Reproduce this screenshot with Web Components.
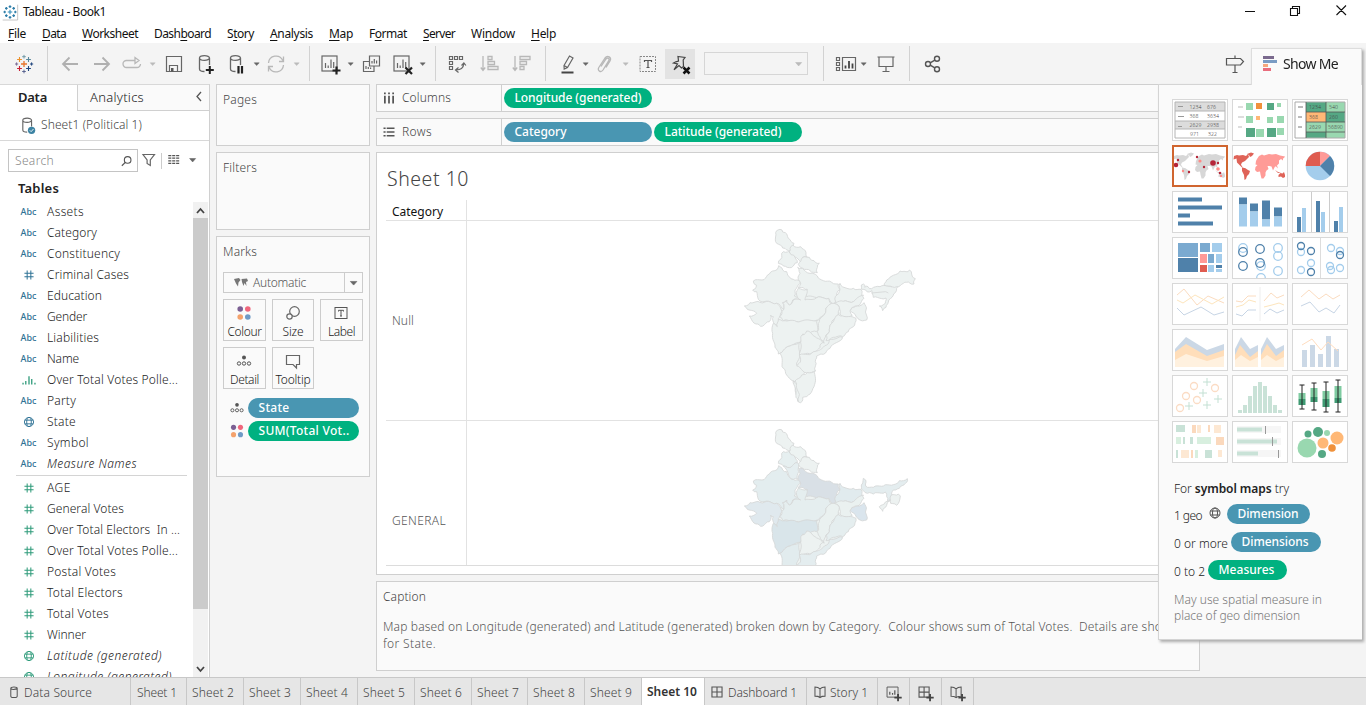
<!DOCTYPE html>
<html lang="en">
<head>
<meta charset="utf-8">
<title>Tableau - Book1</title>
<style>
html,body{margin:0;height:100%;overflow:hidden}
body{font-family:"Noto Sans","Liberation Sans",sans-serif;font-size:12px;font-weight:300;color:#222}
</style>
</head>
<body>
<tb-app></tb-app>
<script>
const make=(tag,css,html,after)=>customElements.define(tag,class extends HTMLElement{
  connectedCallback(){
    if(this.shadowRoot)return;
    const r=this.attachShadow({mode:'open'});
    const t=document.createElement('template');
    t.innerHTML='<style>*{box-sizing:border-box}'+css+'</style>'+(typeof html==='function'?html(this):html);
    r.appendChild(t.content.cloneNode(true));
    if(after)after(this);
  }
});

/* Text run set to a fixed measure by tracking */
make('fit-text',':host{display:inline-block;white-space:pre;flex:none;line-height:16px}','<slot></slot>',el=>{
  const w=+el.getAttribute('w');if(!w)return;
  const n=el.textContent.length;
  const nat=el.getBoundingClientRect().width;
  if(nat)el.style.letterSpacing=((w-nat)/n).toFixed(3)+'px';
});
const T=(s,w,st='')=>`<fit-text w="${w}" style="${st}">${s}</fit-text>`;

const S='fill="none" stroke="#666" stroke-width="1.2"';
const L='fill="none" stroke="#b8b8b8" stroke-width="1.3"';
const plus=(x,y,r,c,w=1)=>`<path d="M${x-r} ${y}h${2*r}M${x} ${y-r}v${2*r}" stroke="${c}" stroke-width="${w}" fill="none"/>`;
const logo=plus(12,12,3,'#e8762d',1.3)+plus(7.5,7.5,2.4,'#eb912c',1.1)+plus(16.5,7.5,2.4,'#59879b',1.1)+plus(7.5,16.5,2.4,'#c72035',1.1)+plus(16.5,16.5,2.4,'#1f457e',1.1)+plus(12,4.7,1.8,'#7099a6')+plus(12,19.5,1.8,'#5b6591')+plus(4.6,12,1.6,'#7b6a96')+plus(19.6,12,1.6,'#1f457e');
const blueLogo='<path d="M0 0h24v24H0z" fill="#fff"/><path d="M23.500 1v23H1" fill="none" stroke="#aaa"/><g fill="none">'+plus(12,12,3.4,'#2f8bb8',1.6)+[[6.5,6.5],[17.5,6.5],[6.5,17.5],[17.5,17.5],[12,4],[12,20],[4,12],[20,12]].map(p=>plus(p[0],p[1],2,'#2d7da8',1.8)).join('')+'</g>';
const dots=`<circle cx="8.2" cy="8" r="2.8" fill="#7b5f93"/><circle cx="15.8" cy="8" r="2.8" fill="#f0667c"/><circle cx="8.2" cy="16" r="2.8" fill="#f4a26c"/><circle cx="15.8" cy="16" r="2.8" fill="#6f9ac6"/>`;
const chart=`<rect x="4" y="4" width="15" height="15" ${S}/><path d="M7.5 16v-5M10.2 16v-2.5M13 16V7.5M15.7 16v-6" ${S} stroke-width="1.7"/>`;
const bp='<path d="M18.5 14.5v8M14.5 18.5h8" stroke="#222" stroke-width="2.2"/>';
const cyl='<path d="M5.5 6v11c0 1.5 2 2.5 5 2.5M15.5 6v7M5.5 6a5 2.4 0 0 1 10 0 5 2.4 0 0 1-10 0z" fill="none" stroke="#666" stroke-width="1.3"/>';
const ICONS={
 logo,blueLogo,dots,
 back:`<path d="M20 12H5M11.500 5.500 5 12l6.500 6.500" fill="none" stroke="#b0b0b0" stroke-width="1.800"/>`,
 fwd:`<path d="M4 12h15M12.500 5.500 19 12l-6.500 6.500" fill="none" stroke="#b0b0b0" stroke-width="1.800"/>`,
 loop:`<path d="M15 8.500H6.500a3.500 3.500 0 0 0 0 7h10.500a3.500 3.500 0 0 0 3.500-3.500M15 5.500v6l4-3z" ${L}/>`,
 caret:'<path d="M9.200 10.800h5L11.700 13.600z" fill="#666" stroke="#666" stroke-width=".5"/>',
 caretL:'<path d="M9.200 10.800h5L11.700 13.600z" fill="#bbb" stroke="#bbb" stroke-width=".5"/>',
 save:`<path d="M4.500 4.500h15v15h-15zM7.500 19.500v-6h8v6" ${S}/><path d="M9 16h2.500v3.500H9z" fill="#555"/>`,
 dbplus:cyl+'<path d="M14.800 14v8M10.800 18h8" stroke="#222" stroke-width="2" transform="translate(1 0)"/>',
 dbpause:cyl+'<path d="M13.500 14v7.500M17 14v7.500" stroke="#222" stroke-width="2.200"/>',
 refresh:`<path d="M4.500 11a7.500 7.500 0 0 1 14.300-2.500M19.500 13a7.500 7.500 0 0 1-14.300 2.500M19.500 4.500v5h-4.500M4.500 19.500v-5H9" ${L}/>`,
 newsheet:chart+bp,
 clear:chart+'<path d="M15.500 15.500l6.500 6.500M22 15.500l-6.500 6.500" stroke="#222" stroke-width="2.200"/>',
 dup:`<path d="M10.500 4h10v10h-10zM10 9.500H4.500v10H15V14" ${S}/><path d="M13 11.500V9M15.300 11.500V7M17.600 11.500V8.500M7 17V14M9.300 17v-2M11.600 17v-1.500" ${S}/>`,
 swap:`<path d="M4.500 4.500h3v3h-3zM9.500 4.500h3v3h-3zM14.500 4.500h3v3h-3zM4.500 9.500h3v3h-3zM4.500 14.500h3v3h-3zM11 18c4 0 7.500-2 7.800-6.500M16.500 13.500l2.400-2.500 2 2.500M13.500 15.500 10.500 18l3 2.500" ${S}/>`,
 sortasc:`<path d="M5 4v14M2.800 15.500 5 18.500l2.200-3M10 4.500h4v3h-4zM10 9.500h6.500v3H10zM10 14.500h10v3H10z" ${L}/>`,
 sortdesc:`<path d="M5 4v14M2.800 15.500 5 18.500l2.200-3M10 4.500h10v3H10zM10 9.500h6.500v3H10zM10 14.500h4v3h-4z" ${L}/>`,
 pen:`<path d="M8 13.500 13.500 4l3.500 2-5.500 9.500-3.300 1.500zM8 13.500l3.500 2" ${S}/><path d="M5.500 20.500H17.500" stroke="#444" stroke-width="2"/>`,
 clip:`<path d="M9 14l5-7.500c1.500-2 4-.3 2.800 1.700L11 17.500c-2 3-6.200.8-4.200-2.500L13 5.500c2.500-3.500 7-.5 5 3L14 15" ${L} transform="translate(-1 .5)"/>`,
 tbox:'<rect x="4" y="4.500" width="15.500" height="15" fill="none" stroke="#888" stroke-dasharray="2 1"/><path d="M8.500 10V8.500h7V10M12 8.500v7M10.500 15.500h3" stroke="#555" stroke-width="1.200" fill="none"/>',
 lbl:'<rect x="6" y="6.500" width="12" height="11" fill="none" stroke="#555"/><path d="M9.500 10.500V9.300h5v1.200M12 9.300V15M11 15h2" stroke="#555" fill="none"/>',
 pin:'<path d="M10 4.500 17 5.500l-1.800 2.500.3 6.500-2 1.500-2.500-2.500-5 4.200 3.500-5.700L5.500 11l2.300-1.200 2.700-.800z" fill="none" stroke="#444" stroke-width="1.200"/><path d="M15.500 15.500l6 6M21.500 15.500l-6 6" stroke="#111" stroke-width="2.500"/>',
 cards:`<path d="M2.500 5.500h3v3h-3zM2.500 10.500h3v3h-3zM2.500 15.500h3v3h-3zM8.500 5.500h13v13h-13z" ${S}/><path d="M11.500 16.500v-3M15 16.500V9M18.500 16.500v-5" stroke="#444" stroke-width="1.800"/>`,
 present:`<path d="M3.500 5h17M5 5v9.500h14V5M12 14.500V19M8.500 19.500h7" ${S} stroke-width="1.400"/>`,
 share:`<g fill="none" stroke="#555" stroke-width="1.400"><circle cx="7" cy="12" r="2.500"/><circle cx="16" cy="6.800" r="2.500"/><circle cx="16" cy="17.200" r="2.500"/><path d="M9.200 10.800l4.600-2.700M9.200 13.200l4.600 2.700"/></g>`,
 guide:'<path d="M3.500 6.500h14l3 3-3 3.500h-14zM12 3.500v3M12 13v7.500M9.500 20.500h5" fill="none" stroke="#555" stroke-width="1.200"/>',
 db:cyl+'<circle cx="15.500" cy="17.500" r="4.200" fill="#3c83a3"/><path d="M13.500 17.500l1.500 1.500 2.700-3" stroke="#fff" fill="none"/>',
 mag:'<path d="M11.200 13.500 7.500 17.200" stroke="#555" stroke-width="1.300"/><circle cx="13.800" cy="10.800" r="3.600" fill="none" stroke="#555" stroke-width="1.200"/>',
 funnel:`<path d="M6 6.500h11.500L13.300 12v5.500l-3.200-2V12z" ${S}/>`,
 rows:'<path d="M6 7.500h13M6 10.500h13M6 13.500h13M6 16.500h13" stroke="#555" stroke-width="1.400" stroke-dasharray="3.500 1"/>',
 globe:'<g fill="none" stroke="currentColor" stroke-width="1"><circle cx="12" cy="12" r="5"/><ellipse cx="12" cy="12" rx="2.500" ry="5"/><path d="M7.500 10h9M7.500 14h9"/></g>',
 hash:'<path d="M10 7v10M14 7v10M7 10h10M7 14h10" fill="none" stroke="currentColor" stroke-width="1.100"/>',
 bars:'<path d="M5.500 17v-2M8.500 17v-4M12 17V8M15 17v-6M18.500 17v-2" stroke="currentColor" stroke-width="1.400"/>',
 size:`<circle cx="13.500" cy="10.500" r="4.800" ${S}/><circle cx="8.500" cy="15.500" r="2.700" fill="#fafafa" stroke="#666" stroke-width="1.200"/>`,
 detail:'<circle cx="12" cy="8.500" r="2" fill="#555"/><g fill="none" stroke="#555"><circle cx="7" cy="14.500" r="1.700"/><circle cx="12" cy="14.500" r="1.700"/><circle cx="17" cy="14.500" r="1.700"/></g>',
 tip:`<path d="M5.500 6.500h13v9h-3V19l-3.500-3.500H5.500z" ${S}/>`,
 earth:'<path d="M5 8l5-1 1.500 2-2 2.500-.5 4-2-3zM12.500 8l5.500-.5 1 2.500-2 1 .5 4-2-3-1 3-1.500-4z" fill="#777"/>',
 cols:'<path d="M7.500 6v2M12 6v2M16.500 6v2M7.500 9.500V18M12 9.500V18M16.500 9.500V18" stroke="#555" stroke-width="1.900"/>',
 rws:'<path d="M6 8h2.300M6 12h2.300M6 16h2.300M9.500 8H18M9.500 12H18M9.500 16H18" stroke="#555" stroke-width="1.700"/>',
 src:'<path d="M8.500 8v8.500c0 2 7 2 7 0V8c0-2-7-2-7 0 0 1.300 4 1.700 7 .2" fill="none" stroke="#555" stroke-width="1.100"/>',
 dash:'<path d="M6.500 6.500h11v11h-11zM12 6.500v11M6.500 12h11" fill="none" stroke="#555" stroke-width="1.200"/>',
 book:'<path d="M12 8.500v9M6.500 6.500c2 0 4 .5 5.500 2C13.500 7 15.500 6.500 17.500 6.500v10c-2 0-4 .3-5.500 1.500-1.500-1.200-3.500-1.500-5.500-1.500z" fill="none" stroke="#555" stroke-width="1.100"/>',
};
const sp='<path d="M17.500 13v8M13.500 17h8" stroke="#444" stroke-width="2"/>';
ICONS.nsheet='<path d="M5.500 5.500h12v11h-12z" fill="none" stroke="#555"/><path d="M8.500 14v-3.500M11.500 14v-2M14 14V9" stroke="#555" stroke-width="1.300"/>'+sp;
ICONS.ndash='<g transform="translate(-1 -1)">'+ICONS.dash+'</g>'+sp;
ICONS.nbook='<g transform="translate(-1 -1)">'+ICONS.book+'</g>'+sp;
make('ui-icon',':host{display:inline-flex;flex:none;width:24px;height:24px}svg{width:100%;height:100%;display:block;overflow:visible}',el=>`<svg viewBox="0 0 24 24">${ICONS[el.getAttribute('name')]||''}</svg>`);
const I=(n,st='')=>`<ui-icon name="${n}" style="${st}"></ui-icon>`;

make('field-pill',':host{display:flex;align-items:center;height:20px;border-radius:10px;padding-left:10.500px;color:#fff;font-weight:500;background:#4996b2;flex:none;box-sizing:border-box}:host([green]){background:#00b180}','<slot></slot>');
const P=(s,tw,w,g,st='')=>`<field-pill ${g?'green':''} style="width:${w}px;${st}">${T(s,tw)}</field-pill>`;

make('title-bar',`:host{display:flex;height:22px;background:#fff;align-items:center;color:#111;padding:1px 0 0 2px;font-weight:400}
.ctl{margin-left:auto;display:flex}svg{display:block}`,
 I('blueLogo','width:16px;height:16px;margin-right:5px')+T('Tableau - Book1',83)+`<div class="ctl"><svg width="126" height="22" fill="none" stroke="#111" stroke-width="1.100"><path d="M5 10.500h10M50.500 7.500h7v7h-7zM52.500 7V5.500h7v7H58M96.500 4.500l9.500 9.500M106 4.500l-9.500 9.500"/></svg></div>`);

make('menu-bar',`:host{display:flex;height:21px;background:#fff;align-items:center;padding-left:8px;gap:16px;color:#111;padding-top:3px;font-weight:400}u{text-underline-offset:2px}`,
 [['<u>F</u>ile',18],['<u>D</u>ata',24],['<u>W</u>orksheet',56],['Dash<u>b</u>oard',57],['S<u>t</u>ory',27],['<u>A</u>nalysis',43],['<u>M</u>ap',24],['F<u>o</u>rmat',38],['<u>S</u>erver',32],['Wi<u>n</u>dow',44],['<u>H</u>elp',25]].map(m=>T(...m)).join(''));

const tools=[['logo',23.5,24],['|',47],['back',69.5,24],['fwd',102,24],['loop',132,24],['caretL',152.500,24],['save',174,24],['dbplus',206,24],['dbpause',236.5,24],['caret',256.500,24],['refresh',276,24],['caretL',297,24],['|',309],['newsheet',330,24],['caret',351,24],['dup',371,24],['clear',402,24],['caret',423,24],['|',435],['swap',457,24],['sortasc',490,24],['sortdesc',522,24],['|',545],['pen',568,24],['caret',585.500,24],['clip',605,24],['caretL',625.500,24],['tbox',648,24],['pin',680,30],['box',756,104],['|',823],['cards',846,24],['caret',863.500,24],['present',885.500,24],['|',909],['share',932.500,24],['guide',1234.500,24]];
make('tool-bar',`:host{display:flex;height:41px;background:#f4f4f4;align-items:center}
i{display:block;width:1px;height:35px;background:#d2d2d2;flex:none}
.on{width:30px;height:30px;background:#e3e3e3;display:grid;place-items:center;flex:none}
.box{width:104px;height:23px;border:1px solid #d6d6d6;display:flex;align-items:center;justify-content:flex-end;flex:none}`,()=>{
 let x=0;return tools.map(([n,c,w=1])=>{const m=c-w/2-x;x=c+w/2;const st=`margin-left:${m}px`;
  if(n==='|')return `<i style="${st}"></i>`;
  if(n==='pin')return `<div class="on" style="${st}">${I('pin')}</div>`;
  if(n==='box')return `<div class="box" style="${st}">${I('caretL','margin-right:-4px;transform:scale(1.2)')}</div>`;
  return I(n,st);}).join('');});

const fields=[['Abc','Assets',37],['Abc','Category',50],['Abc','Constituency',73],['hash','Criminal Cases',82],['Abc','Education',55],['Abc','Gender',40],['Abc','Liabilities',52],['Abc','Name',32],['bars','Over Total Votes Polle...',131,'g'],['Abc','Party',29],['globe','State',29],['Abc','Symbol',42],['Abc','Measure Names',90,'i'],0,['hash','AGE',24,'g'],['hash','General Votes',77,'g'],['hash','Over Total Electors  In ...',133,'g'],['hash','Over Total Votes Polle...',131,'g'],['hash','Postal Votes',69,'g'],['hash','Total Electors',76,'g'],['hash','Total Votes',62,'g'],['hash','Winner',39,'g'],['globe','Latitude (generated)',115,'gi'],['globe','Longitude (generated)',125,'gi']];
make('field-row',`:host{display:flex;height:21px;align-items:center;color:#2e7295}:host([green]){color:#2d9a79}
.k{width:17px;margin-left:20px;margin-right:10px;display:flex;justify-content:center;font-size:9px;font-weight:500}.t{color:#222}`,
 el=>{const k=el.getAttribute('kind');return `<span class="k">${k==='Abc'?T('Abc',16,'padding-top:1px'):I(k,'width:22px;height:22px;margin:-1px')}</span><span class="t">${T(el.getAttribute('label'),el.getAttribute('w'),el.hasAttribute('it')?'font-style:italic':'')}</span>`});
make('data-pane',`:host{display:flex;flex-direction:column;width:210px;flex:none;background:#fff;border-right:1px solid #d0d0d0;border-top:1px solid #d8d8d8;overflow:hidden}
.tabs{display:flex;height:26px;font-size:13px;flex:none}.a{width:77px;padding:3px 0 0 18px;font-weight:600;color:#222;line-height:18px}.b{flex:1;border-left:1px solid #d0d0d0;border-bottom:1px solid #d0d0d0;background:#fafafa;padding:4px 1px 0 12px;display:flex;justify-content:space-between}.b svg{margin-top:-1px}
.ds{height:30px;border-bottom:1px solid #d8d8d8;display:flex;align-items:center;padding:0 0 1px 18px;gap:1px;color:#444;flex:none}
.s{display:flex;align-items:center;padding:8px 0 0 8px;flex:none}.q{width:130px;height:23px;border:1px solid #c4c4c4;display:flex;align-items:center;justify-content:space-between;padding-left:6px;color:#888}
.sep{width:1px;height:16px;background:#ccc}
h4{margin:0;font-size:13px;font-weight:600;color:#222;padding:7px 0 0 18px;height:30px;flex:none}
.l{display:flex;flex:1;min-height:0}.f{flex:1;overflow:hidden;margin-top:-1px}.hr{height:1px;background:#d4d4d4;margin:1px 6px 1px 16px}
.sb{width:15px;background:#f1f1f1;margin-right:1px;display:flex;flex-direction:column;align-items:center}.th{width:15px;height:391px;background:#cbcbcb}.sb svg{flex:none}.sb .e{margin-top:auto}`,
 ()=>`<div class="tabs"><div class="a">${T('Data',29)}</div><div class="b">${T('Analytics',54)}<svg width="16" height="16"><path d="M9 4 5 8.500l4 4.500" fill="none" stroke="#555" stroke-width="1.300"/></svg></div></div>
<div class="ds">${I('db','width:21px;height:21px')}${T('Sheet1 (Political 1)',101,'margin-left:1px')}</div>
<div class="s"><div class="q">${T('Search',39)}${I('mag','width:22px;height:22px')}</div>${I('funnel','margin:-2px -1px 0')}<div class="sep" style="margin-left:1px"></div>${I('rows','width:21px;height:21px;margin:-2px 1px 0')}${I('caret','margin:-2px 0 0 -4px;transform:scale(1.2)')}</div>
<h4>${T('Tables',41)}</h4><div class="l"><div class="f">${fields.map(f=>f?`<field-row kind="${f[0]}" label="${f[1]}" w="${f[2]}" ${/g/.test(f[3]||'')?'green':''} ${/i/.test(f[3]||'')?'it':''}></field-row>`:'<div class="hr"></div>').join('')}</div>
<div class="sb"><svg width="15" height="16"><path d="M4 11l3.500-4 3.500 4" fill="none" stroke="#444" stroke-width="1.800"/></svg><div class="th"></div><svg class="e" width="15" height="17"><path d="M4 7l3.500 4L11 7" fill="none" stroke="#444" stroke-width="1.800"/></svg></div></div>`);

make('side-card',':host{display:block;background:#fafafa;border:1px solid #cfcfcf;padding:6px 6px;color:#444;flex:none;box-sizing:border-box}','<slot></slot>');
make('mark-button',':host{display:flex;flex-direction:column;align-items:center;height:42px;border:1px solid #ccc;color:#222;box-sizing:border-box;padding-top:1px}fit-text{line-height:15px;margin-top:-1px}',el=>I(el.getAttribute('icon'),'margin-left:-1px')+T(el.getAttribute('label'),el.getAttribute('w')));
make('marks-card',`:host{display:block}.dd{display:flex;height:21px;border:1px solid #ccc;margin:12px 0 6px;align-items:center;color:#555}.dd i{border-left:1px solid #ccc;height:19px;width:18px;margin-left:auto;display:flex;align-items:center}
.g{display:grid;grid-template-columns:43px 42px 43px;gap:6px 6px;justify-content:space-between}.r{display:flex;height:20px;align-items:center;margin:9px 0 3px 4px}.r+.r{margin-top:3px}.m{display:block;height:17px}`,
 `<span class="m">${T('Marks',34)}</span><div class="dd">${I('earth','margin-left:5px;margin-right:0')}${T('Automatic',53)}<i>${I('caret','margin-left:-3px;transform:scale(1.3)')}</i></div>
<div class="g"><mark-button icon="dots" label="Colour" w="34"></mark-button><mark-button icon="size" label="Size" w="21"></mark-button><mark-button icon="lbl" label="Label" w="27"></mark-button><mark-button icon="detail" label="Detail" w="29"></mark-button><mark-button icon="tip" label="Tooltip" w="35"></mark-button></div>
<div class="r">${I('detail','width:22px;height:22px;margin:0 0 0 -1px')}${P('State',31,111)}</div><div class="r">${I('dots','width:22px;height:22px;margin:0 0 0 -1px')}${P('SUM(Total Vot..',91,111,1)}</div>`);

make('shelf-row',`:host{display:flex;height:28px;border:1px solid #cfcfcf;background:#fafafa;align-items:center;box-sizing:border-box;flex:none;color:#444}.n{width:125px;height:100%;border-right:1px solid #cfcfcf;display:flex;align-items:center;gap:2px;flex:none;margin-right:2px}slot{display:flex}`,
 el=>`<div class="n">${I(el.getAttribute('icon'),'width:22px;height:22px;margin-left:1px')}${T(el.getAttribute('label'),el.getAttribute('w'))}</div><slot></slot>`);

/* Indian states: id, outline, fill in the GENERAL pane */
const states=[
['jk','137,38 150,28 158,36 166,38 175,55 192,70 189,78 178,95 165,85 158,84 140,70','#edf2f1'],
['hp','178,95 180,85 189,75 205,82 212,80 228,98 232,112 218,112 212,128 192,110','#edf3f2'],
['pb','160,95 178,92 184,104 195,112 202,128 192,135 178,143 160,138 145,130 152,118 155,100','#e6eff0'],
['uk','208,128 218,112 238,112 252,122 268,130 262,142 262,158 240,152 218,145 208,138','#edf2f1'],
['rj','146,137 158,150 170,155 178,170 190,178 205,180 212,190 195,210 193,228 212,240 188,240 178,255 170,240 158,248 162,268 140,250 115,244 90,243 80,215 68,210 80,196 70,183 96,180 118,162 135,152','#e3edef'],
['gj','43,258 60,248 90,247 115,244 140,250 156,275 145,295 142,315 133,318 130,290 122,285 118,305 92,319 78,312 58,288 80,280 52,268','#e0e9ee'],
['up','203,142 218,145 240,160 262,168 280,182 305,187 325,192 330,210 320,222 312,252 296,235 260,233 230,230 232,208 220,203 205,205 212,190 205,178 210,160','#d9e0e6'],
['mp','156,275 162,268 158,248 170,240 178,255 190,240 212,240 200,225 205,205 230,208 225,240 260,233 296,235 305,252 292,260 284,282 266,300 240,302 200,305 160,302 148,290','#e5eeef'],
['br','330,190 345,203 370,205 393,208 395,228 370,245 340,244 318,250 316,230 328,215','#e1ebee'],
['jh','312,250 340,244 370,245 400,225 402,235 382,258 362,268 366,285 345,290 330,282 328,262','#eaf1f0'],
['wb','366,262 382,258 402,248 408,270 410,300 390,300 378,290 360,272','#dae5ed'],
['cg','312,250 328,262 325,282 305,310 298,335 288,345 282,370 270,350 262,335 268,305 284,282 292,260','#eaf1f0'],
['or','325,284 345,290 378,295 374,315 355,335 338,350 310,352 288,362 288,345 298,335 305,310','#e5eeef'],
['mh','130,310 142,320 145,298 165,302 200,305 262,300 260,335 240,338 218,342 212,368 180,378 150,400 145,402 135,375 128,340','#d9e5ea'],
['tg','212,368 216,345 230,333 255,350 278,368 270,382 240,402 208,406','#edf2f1'],
['ka','150,400 180,378 210,365 208,402 200,435 225,452 215,470 195,485 170,465 160,445','#e2ecee'],
['ap','208,406 245,400 290,375 298,358 330,350 338,352 300,385 280,403 260,408 256,425 256,452 230,458 200,438 212,420','#e4edef'],
['tn','195,483 215,465 232,458 256,452 252,500 235,525 218,532 212,548 202,540','#e4edef'],
['kl','190,482 200,490 206,518 205,545 198,532','#e4edef']];
const ne={
 as:'394,195 400,192 405,202 414,200 425,206 450,200 490,198 510,192 500,205 496,218 486,232 475,246 468,262 458,272 448,258 466,250 468,234 430,232 426,212 412,216 395,208',
 ar:'462,196 470,180 486,168 510,153 528,155 538,150 545,162 556,176 552,192 535,186 520,190 500,200 475,198',
 as2:'394,195 400,175 407,180 407,198 430,202 460,198 490,194 508,182 532,176 526,190 508,205 490,210 486,225 482,240 472,246 470,230 466,216 430,222 412,220 395,208',
 mn:'484,225 505,222 511,228 500,256 482,250',mz:'448,260 466,246 482,240 470,256 458,274'};
/* Adds fine irregularity to a border; an edge gets the same shape from either side */
const rough=s=>{
 const p=s.split(' ').map(q=>q.split(',').map(Number));let o=[];
 p.forEach((a,i)=>{const b=p[(i+1)%p.length],f=a[0]<b[0]||(a[0]===b[0]&&a[1]<b[1]),u=f?a:b,v=f?b:a;
  const dx=v[0]-u[0],dy=v[1]-u[1],d=Math.hypot(dx,dy)||1,n=Math.max(1,Math.round(d/6));let m=[];
  for(let k=1;k<n;k++){const r=Math.sin(u[0]*12.9+v[1]*7.3+k*5.7)*3;m.push([u[0]+dx*k/n-dy/d*r,u[1]+dy*k/n+dx/d*r]);}
  if(!f)m.reverse();o.push(a,...m);});
 return o.map(q=>q[0].toFixed(1)+','+q[1].toFixed(1)).join(' ');};
make('india-map',':host{display:block;width:200px;height:190px}svg{display:block;width:200px;height:190px}',el=>{
 const tint=el.hasAttribute('tinted');
 const pg=(s,f)=>`<polygon points="${rough(s)}" fill="${f}"/>`;
 let a=states.map(s=>pg(s[1],tint?s[2]:'#edf2f1')).join('');
 a+=tint?pg('160,138 178,143 202,128 206,155 203,178 190,178 178,170','#e5eef0')+pg(ne.as2,'#e4edef')+pg(ne.mn,'#edf2f1')+pg(ne.mz,'#edf2f1'):pg(ne.as,'#edf2f1')+pg(ne.ar,'#edf2f1')+'<path d="M425 219l42-4 8 4" fill="none"/>';
 return `<svg viewBox="0 0 600 570"><polygon points="150,260 212,210 320,225 330,280 370,285 340,345 300,375 240,400 205,450 160,420 140,320" fill="#edf2f1"/><g stroke="#d5d8d8" stroke-width="2.600" stroke-linejoin="round">${a}</g></svg>`});

make('sheet-view',`:host{display:flex;flex-direction:column;height:423px;border:1px solid #cfcfcf;background:#fff;flex:none;box-sizing:border-box;overflow:hidden;padding-left:9px;margin-top:0}
.h{font-size:19.500px;color:#444;height:47px;padding:12px 0 0 1px;box-sizing:border-box}.h fit-text{line-height:26px}
.t{display:grid;grid-template-columns:80px 1fr;grid-template-rows:21px 200px 144px;border-bottom:1px solid #dcdcdc}
.t>div{border-bottom:1px solid #e2e2e2;display:flex;align-items:center;padding-left:6px;overflow:hidden;color:#555}.t>div:nth-child(even){border-left:1px solid #e2e2e2;align-items:flex-start;padding-left:263px}.t>div:nth-child(n+5){border-bottom:0}.t .c{color:#111;padding-top:3px;font-weight:400}.t .r5{align-items:flex-start;padding-top:92px}`,
 `<div class="h">${T('Sheet 10',82)}</div><div class="t"><div class="c">${T('Category',51)}</div><div></div><div>${T('Null',22)}</div><div><india-map style="margin-top:-1px"></india-map></div><div class="r5">${T('GENERAL',54)}</div><div><india-map tinted style="margin-top:-1px"></india-map></div></div>`);

make('caption-box',`:host{display:block;height:90px;border:1px solid #cfcfcf;background:#fafafa;flex:none;padding:6px 6px;box-sizing:border-box;color:#555;overflow:hidden;line-height:17px}.a{color:#444;height:30px}div{height:17px;white-space:nowrap}fit-text{line-height:16px}`,
 `<div class="a">${T('Caption',43)}</div><div>${T('Map based on Longitude (generated) and Latitude (generated) broken down by Category.  Colour shows sum of Total Votes.  Details are shown',795)}</div><div>${T('for State.',53)}</div>`);

make('sheet-tabs',`:host{display:flex;height:28px;background:#e6e6e6;border-top:1px solid #c8c8c8;color:#444;box-sizing:border-box}
div{border-right:1px solid #c8c8c8;display:flex;align-items:center;padding:2px 0 0 6px;flex:none}.on{background:#fff;color:#333;font-weight:600;padding-top:0;padding-left:5px}`,()=>{
 let h=`<div style="width:131px;padding-left:3px">${I('src','width:22px;height:22px;margin:-2px -1px 0 0')}${T('Data Source',68)}</div>`;
 const b=[131,187,244,301,358,415,472,528,585,642];
 for(let i=1;i<10;i++)h+=`<div style="width:${b[i]-b[i-1]}px;padding-left:${i>1?5:6}px">${T('Sheet '+i,i===1?40:42)}</div>`;
 return h+`<div class="on" style="width:63px">${T('Sheet 10',50)}</div><div style="width:102px;padding-left:1px">${I('dash','width:22px;height:22px;margin-top:-2px')}${T('Dashboard 1',69)}</div><div style="width:71px;padding-left:2px">${I('book','width:22px;height:22px;margin-top:-2px')}${T('Story 1',38,'margin-left:-1px')}</div>`+['nsheet','ndash','nbook'].map(n=>`<div style="width:32px;padding-left:4px">${I(n,'width:22px;height:22px')}</div>`).join('')});

const rc=(x,y,w,h,f)=>`<rect x="${x}" y="${y}" width="${w}" height="${h}" fill="${f}"/>`;
const R=(f,a)=>a.map(q=>rc(...q,f)).join('');
const ln=(p,c,w=1)=>`<polyline points="${p}" fill="none" stroke="${c}" stroke-width="${w}"/>`;
const ci=(c,a,r=4.3)=>a.map(q=>`<circle cx="${q[0]}" cy="${q[1]}" r="${q[2]||r}" fill="none" stroke="${c}" stroke-width="1.300"/>`).join('');
const D='#4f81aa',B='#a4cdec',G='#55a884',LG='#99d8b0',O='#ffb876';
const tx=(x,y,s)=>`<text x="${x}" y="${y}" font-size="5.200" font-weight="300" font-family="Noto Sans,sans-serif" fill="#444">${s}</text>`;
const nums=tx(17.5,9.8,'1234')+tx(17.5,19,'368')+tx(17.5,28,'2629')+tx(35,9.8,'676')+tx(35,19,'3634')+tx(35,28,'2938');
const world=(n,s)=>`<path d="M2 11l3-1 2 .5 4-.5 3 1 2-2 1 3-2 2-2 2-3 1.500-1 2 1 2 2 1.500-2-.5-3-3-2-2-.5-4-3 1zM15 9l4-1.500 3 1-2 2.500-2 1-1-2zM10 23l3 0 3 2 2 1-1 3-2 2-1 3-1.500 1-.5-5-2-4z" fill="${n}"/><path d="M24 16l1-2 2-3 3-1.500 2 1 5-1.500 3 .5 4-.5 4 1.500 5 1-1 1.500-1 .5 0 2-2-1.500-2 1.500 0 3-2 2 1 3-2-2-1 0-2 4-1.500-4-2-.5-2 0 1 3-2 1.500-1 2 0 3-2 3-2 0-1-4-.5-3-3 .500-2-2 .500-3 2-2-2-.5z" fill="${s}"/><path d="M46.500 30l2-2 2 .500 1.500-1.500 1 3 0 2-2 1-2-1.500-2.500 .500zM43 25l3 2 3 .500-3 .500z" fill="${n}"/>`;
const thumbs=[
 rc(3,3,50,36,'#fff')+R('#dcdcdc',[[3,3,50,9],[3,22,50,8]])+'<path d="M3 3h50v36H3zM3 12h50M3 22h50M3 30h50" fill="none" stroke="#b4b4b4"/><path d="M6 7.500h5M6 17.500h6M6 27.500h4" stroke="#999"/>'+nums+tx(18,37,'971')+tx(36,37,'322'),
 '<path d="M6 8h5M6 18h6M6 28h4" stroke="#bbb"/>'+R(LG,[[14,4,7,7],[14,17,7,7],[24,30,8,8],[45,4,4,4],[45,17,7,7],[45,29,7,7]])+R(G,[[35,4,7,7],[14,29,9,9],[35,29,9,9]])+rc(24,4,6,6,'#f0913b')+rc(24,17,4,4,O)+rc(35,18,6,6,LG),
 rc(3,3,50,36,'#fff')+R(G,[[14,3,20,10],[34,13,19,10],[14,33,20,6]])+R(LG,[[34,3,19,10],[14,23,20,10],[34,23,19,16]])+rc(14,13,20,10,O)+'<path d="M3 3h50v36H3z" fill="none" stroke="#aaa"/><path d="M14 3v36M34 3v36M14 13h39M14 23h39M14 33h39" fill="none" stroke="#555" stroke-width=".8"/><path d="M6 8h5M6 18h4M6 28h4" stroke="#777"/>'+tx(17,10,'1234')+tx(37,10,'540')+tx(17,20,'368')+tx(37,20,'260')+tx(17,30,'2629')+tx(36,30,'56890'),
 world('#d7d7d7','#d7d7d7')+[[4,20,2.300],[11,26,1.200],[17,27,1.200],[25,12,1.200],[28,16,1.600],[32,22,1.200],[41,18,2.800],[46,24,1.800],[48,28,1.300],[46,18,1.200],[49,31,1.200],[6,15,1.200]].map((q,i)=>`<circle cx="${q[0]}" cy="${q[1]}" r="${q[2]}" fill="${i%3===1?'#ff8b87':'#b52538'}"/>`).join(''),
 world('#df6358','#ff9b97'),
 `<circle cx="28" cy="21" r="14.300" fill="${B}"/><path d="M28 21H13.700a14.300 14.300 0 0 1 14.300-14.300z" fill="#df5c50"/><path d="M28 21V6.700a14.300 14.300 0 0 1 10 4.200z" fill="#ff9a97"/><path d="M28 21l10-10.100a14.300 14.300 0 0 1 0 20.200z" fill="${D}"/>`,
 R(D,[[6,6.500,24,4],[6,14.500,44,4],[6,22.500,12,4],[6,30.500,35,4]]),
 R(D,[[7,6.500,8,7],[18,12.500,8,8],[30,9.500,8,19],[42,16.500,8,9]])+R(B,[[7,13.500,8,22],[18,20.500,8,15],[30,28.500,8,7],[42,25.500,8,10]]),
 '<path d="M19.500 0v42M37.500 0v42" stroke="#ccc"/>'+R(D,[[5,26,4,15],[24,10,4,31],[42,30,4,11]])+R(B,[[10,17,4,24],[29,21,4,20],[47,16,4,25]]),
 R('#7baad0',[[6,6,20,14],[28,6,10,9],[36,17,6,9]])+rc(6,21,20,14,D)+R(B,[[40,6,10,9],[44,17,6,9],[36,28,6,7],[44,32,6,3]])+rc(28,17,7,9,'#ff9a97')+rc(28,28,7,7,'#df5c50')+rc(44,28,6,3,D),
 ci(B,[[11,11],[29,29],[46,11],[46,19],[46,34],[29,41]])+ci(D,[[11,15],[11,29],[28,12],[28,26]]),
 '<path d="M28.500 0v42" stroke="#ddd"/>'+ci(B,[[9,15],[19,26],[9,33],[39,11],[48,14],[39,33],[48,31],[38,29]],3.500)+ci(D,[[9,9],[19,14],[19,35],[48,18]],3.500),
 ln('5,12 12,6 25,22 36,13 52,20','#fbdcc0')+ln('5,17 11,20 23,12 40,21 52,14','#fde5bd')+ln('5,25 12,32 29,24 42,32 52,29','#c7d5e5'),
 ln('4,18 10,19 16,13 24,13','#fbdcc0')+ln('4,24 11,22 17,17 24,19','#fde5bd')+ln('32,18 39,10 45,15 52,12','#fbdcc0')+ln('32,24 40,22 47,20 52,22','#fde5bd')+ln('4,31 10,33 16,27 24,27','#c7d5e5')+ln('32,31 38,26 45,30 52,27','#c7d5e5')+'<path d="M28 4v34" stroke="#eee"/>',
 ln('9,14 17,7 27,16 34,11 41,16 48,12','#fbdcc0')+ln('9,23 18,19 27,29 34,25 42,30 48,22','#c7d5e5'),
 '<path d="M3 20 14 8l21 13 17-6v23H3z" fill="#cbd8e6"/><path d="M3 23 14 15l21 12 17-6v17H3z" fill="#ffdeba"/><path d="M3 31 14 25l21 7 17-5v11H3z" fill="#fff1df"/>',
 '<path d="M3 20 9 8l9 12 8-4v22H3zM29 20 35 8l9 12 8-4v22H29z" fill="#cbd8e6"/><path d="M3 26 8 16l10 12 8-6v16H3zM29 26l6-11 9 12 8-6v17H29z" fill="#ffdeba"/><path d="M3 31l6-5 9 6 8-4v10H3zM29 31l6-5 9 6 8-4v10H29z" fill="#fff1df"/>',
 R('#cbd8e6',[[10,21,5,17],[18,16,5,22],[26,25,5,13],[34,7,5,31],[42,20,5,18]])+ln('10,16 20,10 29,21 36,13 46,22','#ffddbf'),
 ci('#fbdcc4',[[22,11],[14,21],[25,25],[8,33],[43,13]],3.500)+[[35,7],[31,18],[46,24],[17,31],[35,30]].map(q=>plus(...q,4,'#c3e0d3')).join(''),
 R('#c9e2d7',[[6,35,4,3],[11,30,4,8],[16,21,4,17],[21,11,4,27],[26,7,4,31],[31,11,4,27],[36,21,4,17],[41,30,4,8],[46,35,4,3]]),
 [[10,10,34,18,24,30],[22,8,35,13,22,27],[34,7,37,16,24,32],[46,5,37,11,23,28]].map(q=>rc(q[0]-3.5,q[3],7,q[4]-q[3],'#7fcba1')+rc(q[0]-3.5,q[4],7,q[5]-q[4],'#3e9a72')+`<path d="M${q[0]} ${q[1]}V${q[2]}M${q[0]-2.5} ${q[1]}h5M${q[0]-2.5} ${q[2]}h5" stroke="#222"/>`).join(''),
 R('#c9e2d7',[[4,4,9,7],[11,16,2,7],[18,16,3,7],[4,29,2,8],[33,29,7,8]])+R('#d8efdf',[[4,16,5,7],[25,16,14,7],[23,29,3,8],[13,29,2,8]])+R('#fbd9bd',[[20,4,4,8],[36,4,2,7],[44,16,8,8],[19,29,2,8]])+R('#fde8d3',[[25,4,4,8],[42,4,7,8],[9,29,8,8],[46,29,4,7]]),
 R('#f6f6f6',[[5,5,44,7],[5,17,44,7],[5,29,44,7]])+R('#c9e2d7',[[5,6.500,25,4],[5,18.500,40,4],[5,30.500,21,4]])+'<path d="M33.500 5v8M40.500 16v9M46.500 29v8" stroke="#999"/>',
 [[15,27,9.500,LG],[16,13,3.500,G],[26,11,5,G],[35,12,3,LG],[45,17,6.500,O],[31,22,5.500,O],[40,27,3.800,'#f0913b'],[30,33,4,G]].map(q=>`<circle cx="${q[0]}" cy="${q[1]}" r="${q[2]}" fill="${q[3]}"/>`).join('')
];
make('chart-thumb',':host{display:block;width:56px;height:42px;background:#fff;border:1px solid #d8d8d8;box-sizing:border-box;overflow:hidden}:host([on]){border:2px solid #d0652f}svg{display:block;width:56px;height:42px;margin:-1px}:host([on]) svg{margin:-2px}',el=>`<svg viewBox="0 0 56 42">${thumbs[+el.getAttribute('n')]}</svg>`);
make('show-me',`:host{display:block;position:absolute;left:1158px;top:48px;width:204px;filter:drop-shadow(2px 2px 1.500px #aaa)}
.tab{margin-left:93px;height:37px;border:1px solid #ddd;border-bottom:0;background:#fafafa;display:flex;align-items:center;padding:0 0 6px 10px;color:#222;font-size:14px;font-weight:400;position:relative;z-index:1}.tab svg{margin-right:5px}
.p{margin-top:-1px;height:556px;background:#fafafa;border:1px solid #d4d4d4;border-right:0;padding:14px 0 0 13px}
.g{display:grid;grid-template-columns:repeat(3,56px);gap:4px}.x{color:#222}.x>div{display:flex;align-items:center;height:28px}.x b{font-weight:600}`,
 ()=>`<div class="tab"><svg width="15" height="16">${rc(1,0,11,3,'#7b6a8e')+rc(1,4,14,3,'#7a9cc4')+rc(1,8,5,3,'#f5a77d')+rc(1,12,8,3,'#e96d7d')}</svg>${T('Show Me',55,'margin-left:1px')}</div><div class="p"><div class="g">${thumbs.map((_,i)=>`<chart-thumb n="${i}" ${i===3?'on':''}></chart-thumb>`).join('')}</div>
<div class="x" style="padding:11px 0 0 2px"><div style="height:29px">${T('For <b>symbol maps</b> try',115)}</div><div style="height:22px">${T('1 geo',28,'padding-top:4px')}${I('globe','color:#555;margin:-2px 0 0 1px')}${P('Dimension',61,83)}</div><div style="height:34px">${T('0 or more',54,'padding-top:4px')}${P('Dimensions',67,90,0,'margin-left:3px')}</div><div style="height:22px">${T('0 to 2',31,'padding-top:4px')}${P('Measures',56,79,1,'margin-left:3px')}</div>
<div style="height:16px;margin-top:11px;color:#777">${T('May use spatial measure in',148)}</div><div style="height:16px;color:#777">${T('place of geo dimension',126)}</div></div></div>`);

make('tb-app',`:host{display:flex;flex-direction:column;width:1366px;height:705px;background:#f4f4f4;overflow:hidden;position:relative}
main{display:flex;height:593px;flex:none}.cards{display:flex;flex-direction:column;gap:6px;width:154px;margin-left:6px;flex:none}.work{display:flex;flex-direction:column;gap:6px;width:824px;margin-left:6px;flex:none}`,
 `<title-bar></title-bar><menu-bar></menu-bar><tool-bar></tool-bar><main><data-pane></data-pane><div class="cards"><side-card style="height:62px">${T('Pages',34)}</side-card><side-card style="height:78px">${T('Filters',34)}</side-card><side-card style="height:241px"><marks-card></marks-card></side-card></div>
<div class="work"><shelf-row icon="cols" label="Columns" w="49">${P('Longitude (generated)',127,148,1)}</shelf-row><shelf-row icon="rws" label="Rows" w="30">${P('Category',52,148)}${P('Latitude (generated)',117,148,1,'margin-left:2px')}</shelf-row><sheet-view></sheet-view><caption-box></caption-box></div></main><sheet-tabs></sheet-tabs><show-me></show-me>`);
</script>
</body>
</html>
